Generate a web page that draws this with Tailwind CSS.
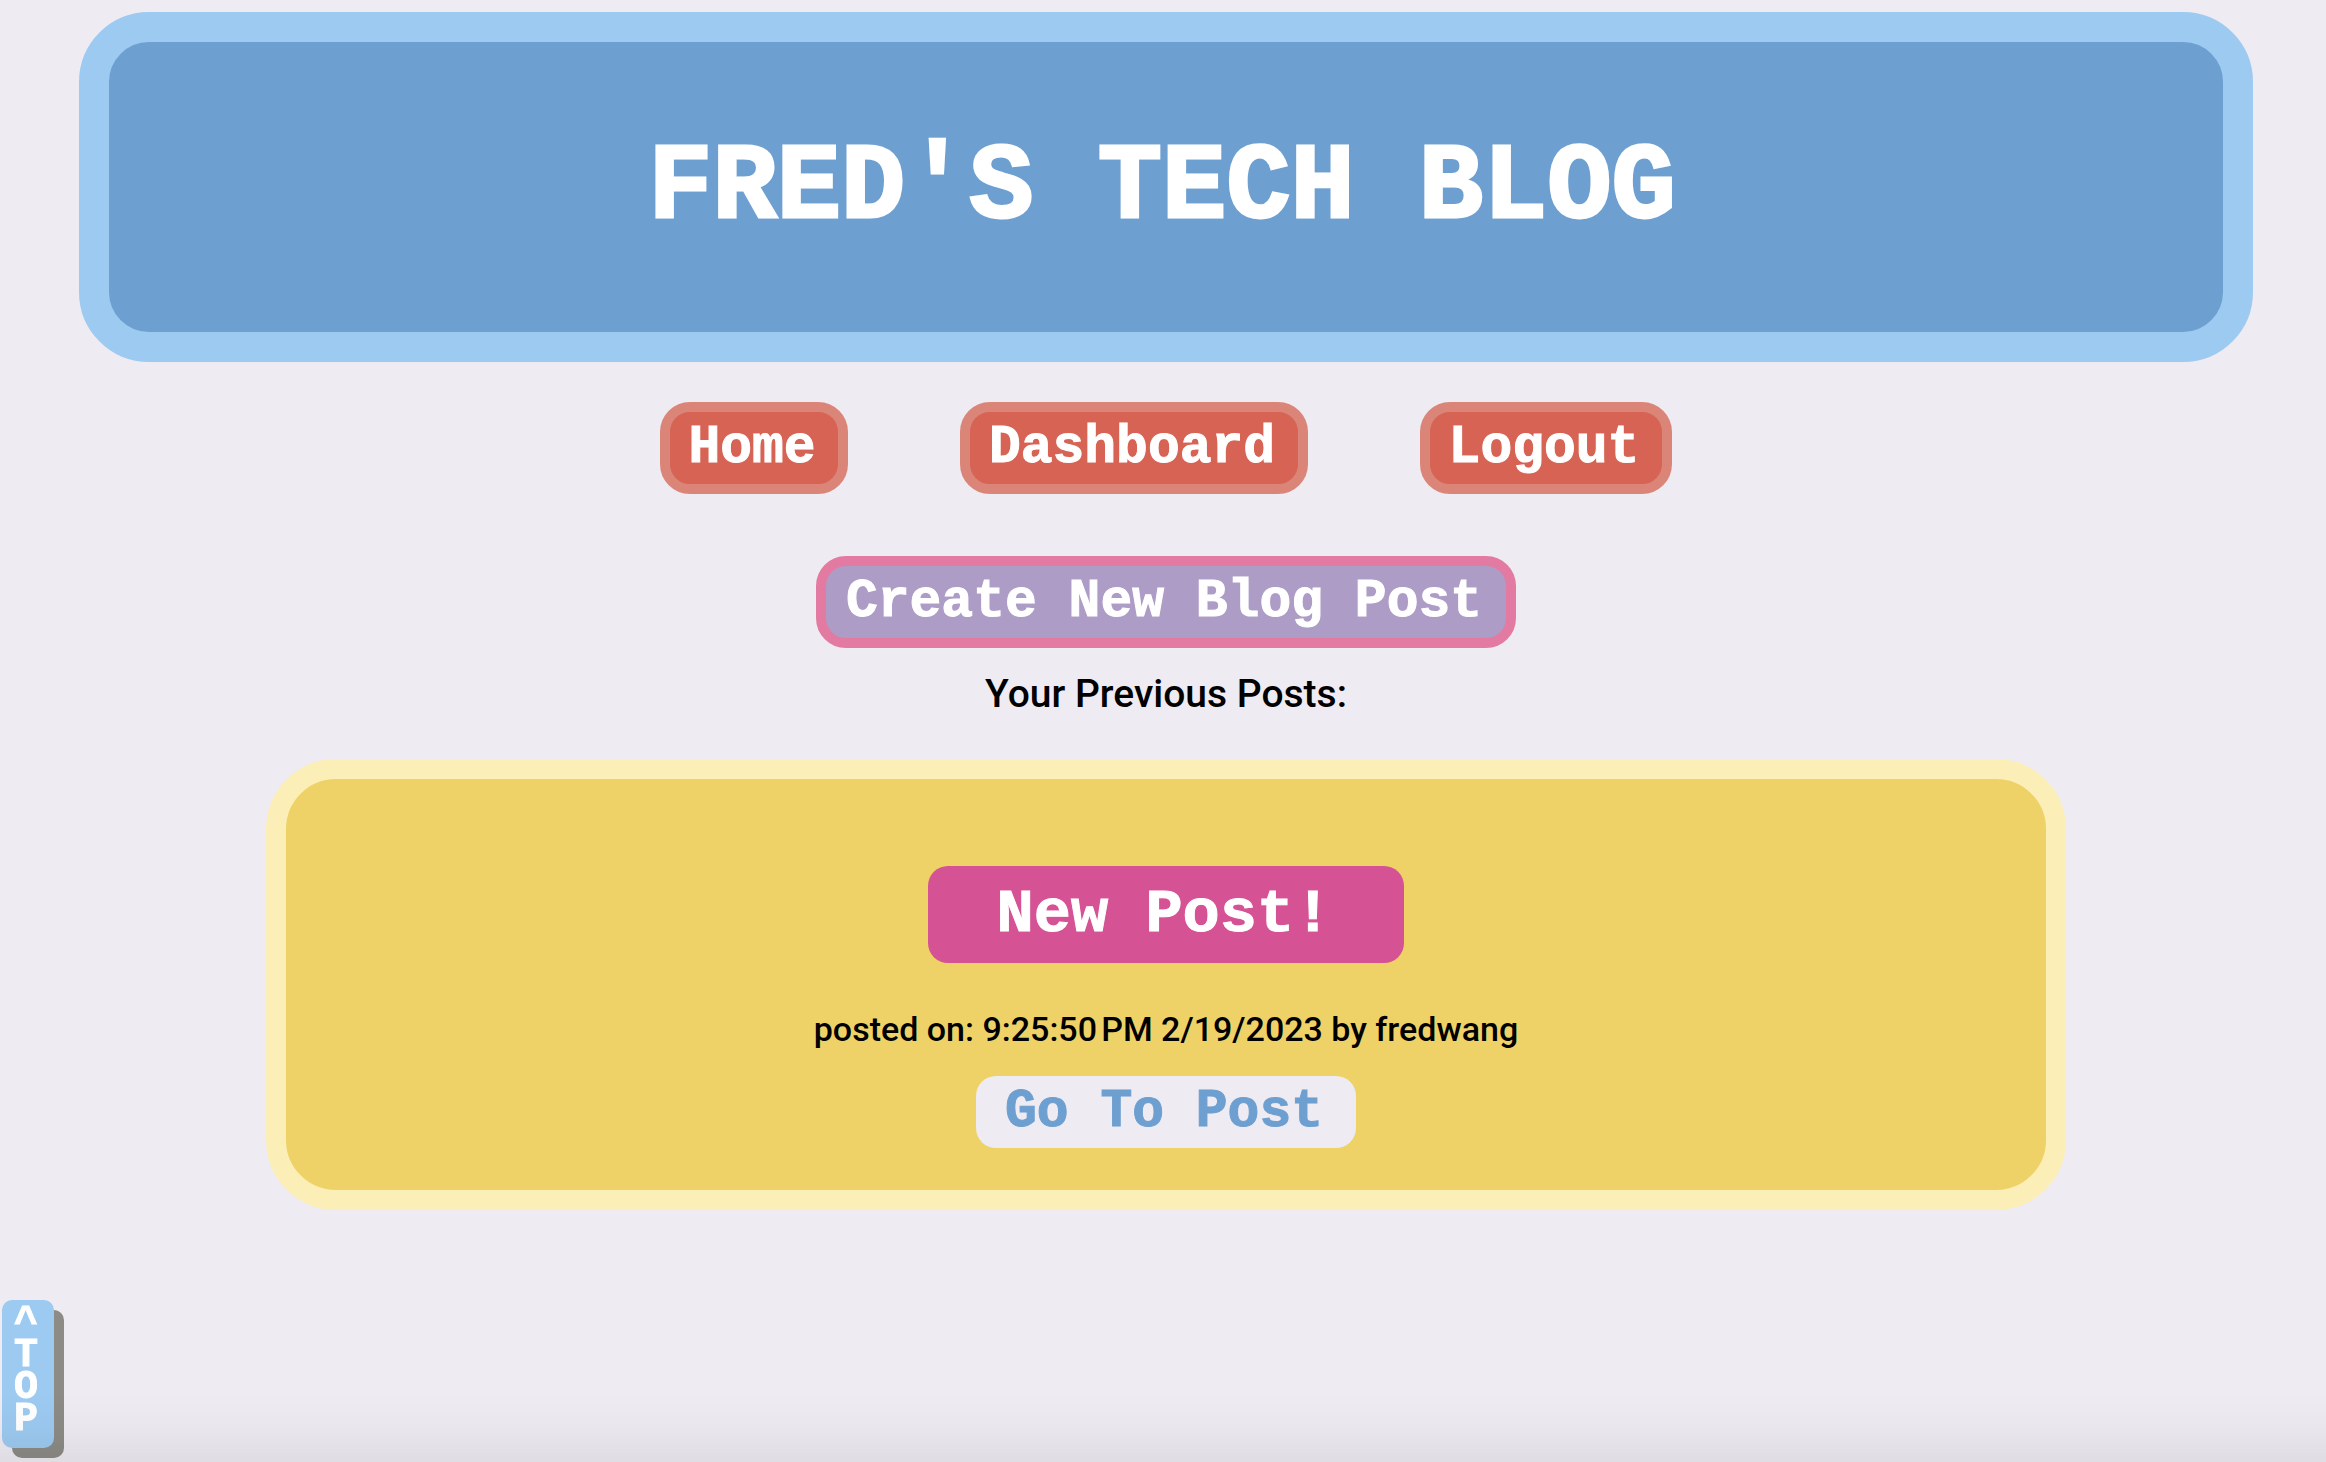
<!DOCTYPE html>
<html lang="en">
<head>
<meta charset="utf-8">
<meta name="viewport" content="width=device-width, initial-scale=1">
<title>Fred's Tech Blog</title>
<script src="https://cdn.jsdelivr.net/npm/@tailwindcss/browser@4"></script>
</head>
<body class="min-h-screen bg-[#eeebf2] pt-3 pl-[79px] pr-[73px] font-['Liberation_Mono',monospace] text-black">
  <header class="flex h-[350px] items-center justify-center rounded-[70px] border-[30px] border-[#9dcaf1] bg-[#6d9fd0] pt-1 pr-2">
    <h1 class="text-center text-[107px] leading-[116px] font-bold whitespace-nowrap text-white [-webkit-text-stroke:3px_white]">FRED'S TECH BLOG</h1>
  </header>

  <nav class="mt-10 flex justify-center gap-28 text-[53px] leading-[72px] font-bold text-white [-webkit-text-stroke:1px_white]">
    <a href="#" class="flex h-[92px] min-w-[188px] items-center justify-center rounded-[30px] border-10 border-[#da8577] bg-[#d66354] pr-1">Home</a>
    <a href="#" class="flex h-[92px] min-w-[348px] items-center justify-center rounded-[30px] border-10 border-[#da8577] bg-[#d66354] pr-1">Dashboard</a>
    <a href="#" class="flex h-[92px] min-w-[252px] items-center justify-center rounded-[30px] border-10 border-[#da8577] bg-[#d66354] pr-1">Logout</a>
  </nav>

  <main class="flex flex-col items-center pt-[62px]">
    <button type="button" class="flex h-[92px] min-w-[700px] items-center justify-center rounded-[30px] border-10 border-[#e37aa1] bg-[#ad9cc5] pr-1 text-[53px] leading-[72px] font-bold text-white [-webkit-text-stroke:1px_white]">Create New Blog Post</button>
    <h2 class="mt-5 text-center font-['Roboto',sans-serif] text-[39px] leading-[52px] font-medium">Your Previous Posts:</h2>

    <div class="mt-[39px] w-full px-[187px]">
      <article class="flex flex-col items-center rounded-[70px] border-20 border-[#fceeb7] bg-[#eed267] pt-[87px] pb-[42px]">
        <h3 class="flex h-[97px] w-[476px] items-center justify-center rounded-[20px] bg-[#d55294] pr-1 text-[62px] leading-[72px] font-bold text-white [-webkit-text-stroke:1px_white]">New Post!</h3>
        <p class="mt-10 text-center font-['Roboto',sans-serif] text-[34px] leading-[52px] font-medium">posted on: 9:25:50&#8239;PM 2/19/2023 by fredwang</p>
        <a href="#" class="mt-[21px] flex h-[72px] min-w-[380px] items-center justify-center rounded-[20px] bg-[#eeebf2] pr-1 text-[53px] leading-[64px] font-bold text-[#6d9fd0] [-webkit-text-stroke:1px_#6d9fd0]">Go To Post</a>
      </article>
    </div>
  </main>

  <a href="#" class="fixed bottom-[14px] left-0.5 flex h-[148px] w-[52px] flex-col items-center rounded-[10px] bg-[#9dcaf1] pt-2 pr-1 text-[40px] leading-8 font-bold text-white shadow-[10px_10px_0_#8c8b86] [-webkit-text-stroke:1px_white]">
    <span>^</span><span>T</span><span>O</span><span>P</span>
  </a>
  <div class="pointer-events-none fixed inset-x-0 bottom-0 h-[68px] bg-linear-to-b from-black/0 via-black/2 to-black/6"></div>
</body>
</html>
